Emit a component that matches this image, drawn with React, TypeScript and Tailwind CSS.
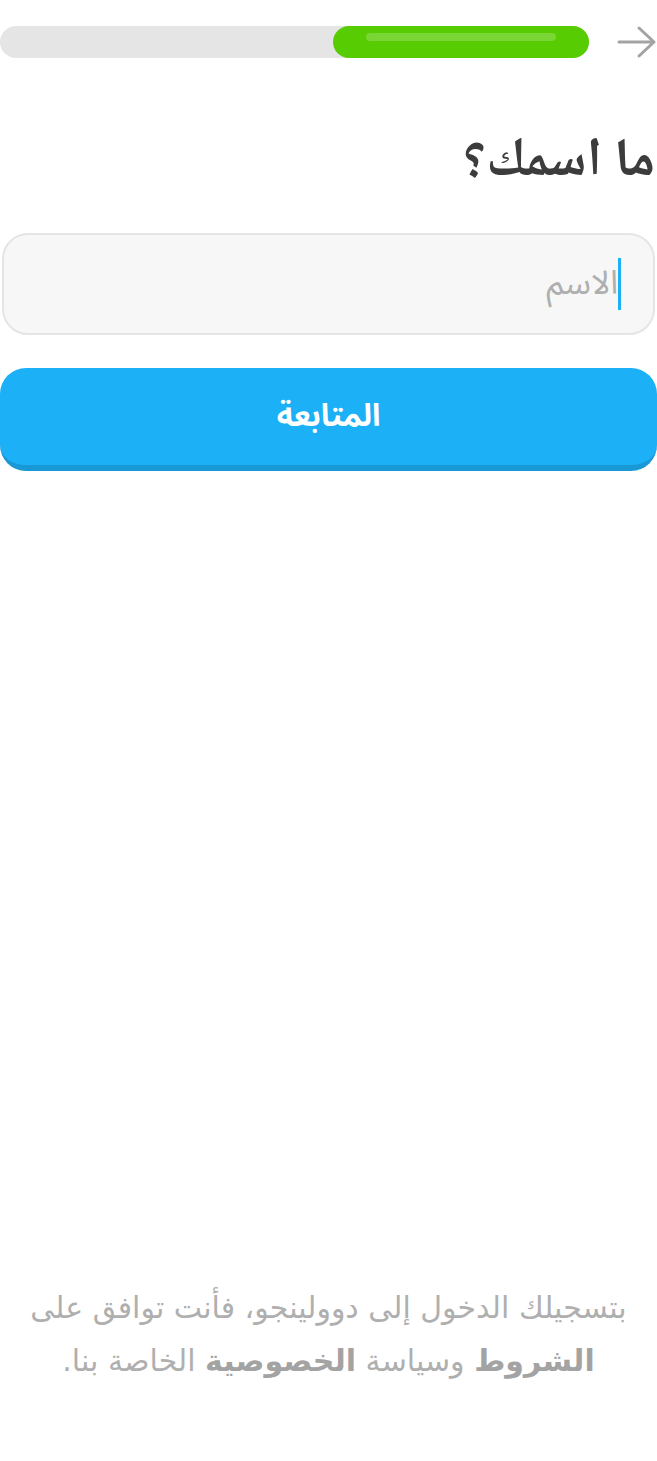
import React from "react";

const sans = {
  fontFamily: '"Noto Sans Arabic", "DejaVu Sans", sans-serif',
};

const ProgressHeader = () => (
  <div className="flex items-center pt-[25px]" dir="ltr">
    <div className="relative h-[32px] w-[592px] rounded-full bg-[#e5e5e5]">
      <div className="absolute right-0 top-0 h-[32px] w-[256px] rounded-full bg-[#58cc02]">
        <div className="mx-auto mt-[7px] h-[8px] w-[190px] rounded-full bg-[#79d634]" />
      </div>
    </div>
    <svg
      className="ml-[28px] shrink-0"
      width="40"
      height="34"
      viewBox="0 0 40 34"
      fill="none"
      stroke="#a3a3a3"
      strokeWidth="3"
      strokeLinecap="round"
      strokeLinejoin="round"
    >
      <path d="M2 17h35M22 3l15 14-15 14" />
    </svg>
  </div>
);

export default function App() {
  return (
    <div
      dir="rtl"
      className="flex min-h-[1461px] w-[657px] flex-col overflow-hidden bg-white"
      style={sans}
    >
      <ProgressHeader />

      <h1
        className="mt-[64px] pr-[2px] text-[54px] font-bold leading-[80px] text-[#3c3c3c]"
        style={{ fontFamily: '"Noto Naskh Arabic", "Noto Sans Arabic", serif' }}
      >
        ما اسمك؟
      </h1>

      <div className="mx-[2px] mt-[30px] flex h-[102px] items-center rounded-[26px] border-2 border-[#e5e5e5] bg-[#f7f7f7] pr-[32px]">
        <span className="h-[52px] w-[3px] bg-[#1cb0f6]" />
        <span className="text-[33px] text-[#afafaf]">الاسم</span>
      </div>

      <button className="mt-[33px] h-[103px] w-full rounded-[26px] border-b-[6px] border-[#1899d6] bg-[#1cb0f6] text-[31px] font-bold text-white">
        المتابعة
      </button>

      <div
        className="mb-[74px] mt-auto flex flex-col items-center px-[20px] text-[30px] leading-[53px] text-[#afafaf]"
        style={{ fontFamily: '"DejaVu Sans", "Noto Sans Arabic", sans-serif' }}
      >
        <p>بتسجيلك الدخول إلى دوولينجو، فأنت توافق على</p>
        <p>
          <span className="font-bold text-[#a3a3a3]">الشروط</span> وسياسة{" "}
          <span className="font-bold text-[#a3a3a3]">الخصوصية</span> الخاصة بنا.
        </p>
      </div>
    </div>
  );
}
